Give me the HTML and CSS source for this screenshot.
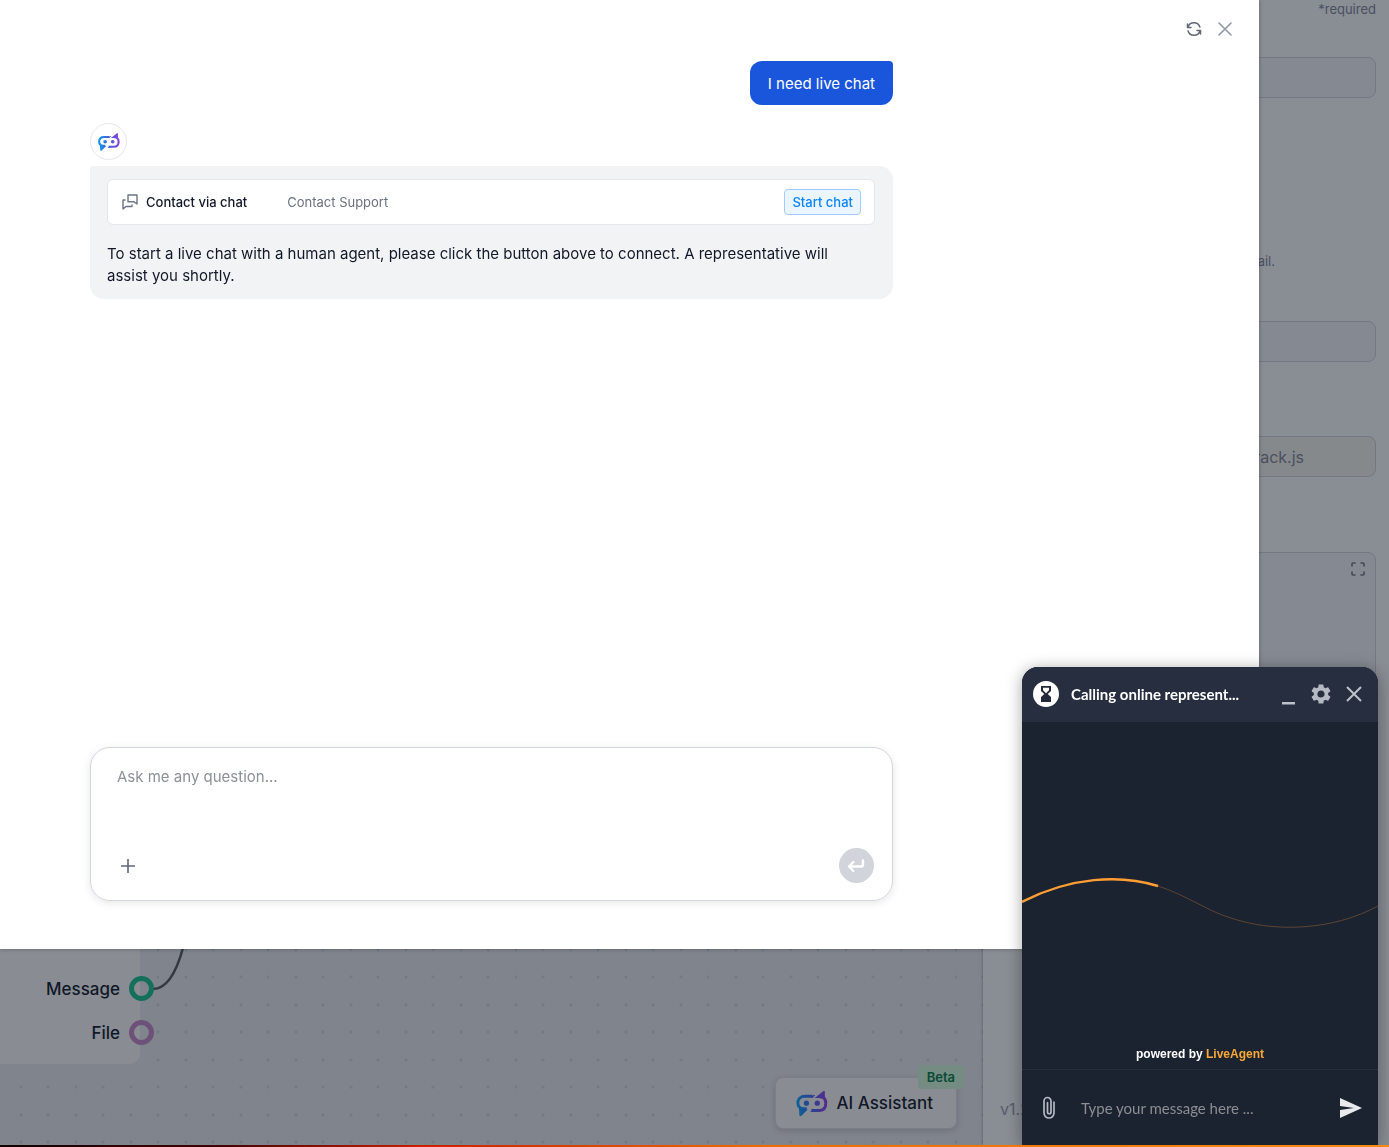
FILE: index.html
```html
<!DOCTYPE html>
<html lang="en">
<head>
    <meta charset="UTF-8">
    <meta name="viewport" content="width=device-width, initial-scale=1.0">
    <title>AI Assistant</title>
    <link rel="stylesheet" href="styles.css">
</head>
<body>
    <!-- Shared logo -->
    <svg class="defs" width="0" height="0" aria-hidden="true">
        <defs>
            <linearGradient id="logoGradient" gradientUnits="userSpaceOnUse" x1="0" y1="40" x2="96" y2="36">
                <stop offset="0" stop-color="#0c9be8"/>
                <stop offset="0.45" stop-color="#3f66e0"/>
                <stop offset="1" stop-color="#8b3fd9"/>
            </linearGradient>
            <symbol id="logo" viewBox="0 0 96 76">
                <g fill="none" stroke="url(#logoGradient)" stroke-width="9">
                    <path d="M50 16H27C12 16 5 25 5 36c0 11 7 18 17 18h10"/>
                    <path d="M46 59h23c14 0 21-9 21-22 0-9-4-15-9-19"/>
                </g>
                <path fill="url(#logoGradient)" d="M8 48l2 28h5l20-20zM45 20l8-8h5l-8 9zM56 21 83 0h4v22l-6 2-12-3zM54 54 42 64h12z"/>
                <circle fill="url(#logoGradient)" cx="31" cy="37" r="8"/>
                <circle fill="url(#logoGradient)" cx="64" cy="37" r="8"/>
            </symbol>
        </defs>
    </svg>

    <div class="workspace">
        <!-- Flow canvas -->
        <main class="canvas">
            <svg class="edge" width="34" height="44" viewBox="0 0 34 44" aria-hidden="true">
                <path d="M2 41C17 41 26 22 32 0" fill="none" stroke="#343841" stroke-width="2.500"/>
            </svg>
            <div class="node">
                <div class="port">Message <span class="socket socket-message"></span></div>
                <div class="port">File <span class="socket socket-file"></span></div>
            </div>
            <button type="button" class="assistant-btn">
                <svg class="assistant-logo" aria-hidden="true"><use href="#logo"/></svg>
                AI Assistant
                <span class="beta">Beta</span>
            </button>
        </main>

        <!-- Settings panel -->
        <aside class="panel">
            <form class="settings">
                <p class="required">*required</p>
                <input type="text" class="field" aria-label="Name">
                <p class="hint">email.</p>
                <input type="text" class="field" aria-label="Email">
                <input type="text" class="field field-script" aria-label="Script" value="track.js">
                <div class="code">
                    <textarea class="field code-field" aria-label="Code"></textarea>
                    <button type="button" class="icon-btn expand" aria-label="Expand">
                        <svg width="14" height="14" viewBox="0 0 14 14" fill="none" stroke="#444957" stroke-width="1.600" stroke-linecap="round" stroke-linejoin="round"><path d="M1 4V2q0-1 1-1h2M10 1h2q1 0 1 1v2M13 10v2q0 1-1 1h-2M4 13H2q-1 0-1-1v-2"/></svg>
                    </button>
                </div>
            </form>
            <p class="version">v1.2</p>
        </aside>
    </div>

    <!-- Assistant dialog -->
    <section class="dialog">
        <header class="dialog-header">
            <button type="button" class="icon-btn" aria-label="Restart">
                <svg width="16" height="16" viewBox="0 0 16 16" fill="none" stroke="#5f6775" stroke-width="1.500" stroke-linecap="round" stroke-linejoin="round"><path d="M1.500 3v3.500H5M14.500 13V9.500H11M2 6.300A6.200 6.200 0 0 1 13.900 6M14 9.700A6.200 6.200 0 0 1 2.100 10"/></svg>
            </button>
            <button type="button" class="icon-btn" aria-label="Close">
                <svg width="16" height="16" viewBox="0 0 16 16" fill="none" stroke="#8f98a8" stroke-width="1.600" stroke-linecap="round"><path d="M2 2l12 12M14 2L2 14"/></svg>
            </button>
        </header>

        <div class="conversation">
            <p class="message message-user">I need live chat</p>
            <div class="avatar">
                <svg class="avatar-logo" aria-hidden="true"><use href="#logo"/></svg>
            </div>
            <div class="message message-bot">
                <div class="contact">
                    <svg width="16" height="16" viewBox="0 0 16 16" fill="none" stroke="#6b7485" stroke-width="1.400" stroke-linejoin="round"><path d="M6 1h9v9l-3-2.300H6zM3.500 6H1v9l3-2.500h6V10.500"/></svg>
                    <span class="contact-title">Contact via chat</span>
                    <span class="contact-info">Contact Support</span>
                    <button type="button" class="start-btn">Start chat</button>
                </div>
                <p class="answer">To start a live chat with a human agent, please click the button above to connect. A representative will assist you shortly.</p>
            </div>
        </div>

        <form class="composer">
            <textarea class="composer-input" placeholder="Ask me any question..." aria-label="Question"></textarea>
            <div class="composer-actions">
                <button type="button" class="icon-btn" aria-label="Add">
                    <svg width="16" height="16" viewBox="0 0 16 16" fill="none" stroke="#5f6779" stroke-width="1.600"><path d="M8 1v14M1 8h14"/></svg>
                </button>
                <button type="button" class="send-btn" aria-label="Send">
                    <svg width="20" height="14" viewBox="0 0 20 14" fill="none" stroke="#fff" stroke-width="2.400" stroke-linecap="round" stroke-linejoin="round"><path d="M16 1.500V5.500Q16 7.500 14 7.500H2M6.300 3 2 7.500l4.300 4.500"/></svg>
                </button>
            </div>
        </form>
    </section>

    <!-- LiveAgent widget -->
    <section class="widget">
        <header class="widget-header">
            <span class="widget-status">
                <svg width="12" height="16" viewBox="0 0 12 16"><path fill="#222a3b" fill-rule="evenodd" d="M1 0h10v5L7.700 8 11 11v5H1v-5l3.300-3L1 5zM3 1.700v2.600l3 2.900 3-2.900V1.700z"/></svg>
            </span>
            <h2 class="widget-title">Calling online represent...</h2>
            <div class="widget-controls">
                <button type="button" class="icon-btn" aria-label="Minimize">
                    <svg width="14" height="22" viewBox="0 0 14 22"><path fill="#bcc1ca" d="M0 19h13v2.500H0z"/></svg>
                </button>
                <button type="button" class="icon-btn" aria-label="Settings">
                    <svg width="24" height="24" viewBox="0 0 24 24"><path fill="#b4b9c2" d="M19.140 12.940c.04-.3.060-.610.060-.940 0-.320-.020-.640-.070-.940l2.030-1.580a.49.49 0 0 0 .12-.610l-1.920-3.320a.488.488 0 0 0-.590-.220l-2.390.960c-.5-.380-1.030-.7-1.620-.940l-.360-2.540a.484.484 0 0 0-.480-.410h-3.840c-.240 0-.430.170-.470.410l-.360 2.540c-.590.240-1.130.570-1.620.940l-2.390-.960c-.220-.080-.470 0-.590.220L2.740 8.870c-.120.210-.080.470.120.610l2.030 1.580c-.050.3-.090.630-.090.940s.020.640.070.940l-2.030 1.580a.49.49 0 0 0-.120.610l1.920 3.320c.120.220.370.290.590.220l2.390-.960c.5.380 1.030.7 1.620.940l.360 2.540c.050.240.240.410.480.410h3.840c.240 0 .440-.170.470-.410l.360-2.540c.590-.240 1.130-.560 1.620-.940l2.390.960c.220.080.470 0 .590-.220l1.920-3.320c.120-.220.070-.470-.120-.610zM12 15.600A3.610 3.610 0 0 1 8.400 12c0-1.980 1.620-3.600 3.600-3.600s3.600 1.620 3.600 3.600-1.620 3.600-3.600 3.600z"/></svg>
                </button>
                <button type="button" class="icon-btn" aria-label="End chat">
                    <svg width="16" height="16" viewBox="0 0 16 16" fill="none" stroke="#bcc1ca" stroke-width="2"><path d="M1 1l14 14M15 1L1 15"/></svg>
                </button>
            </div>
        </header>
        <div class="widget-body">
            <svg class="wave" viewBox="0 0 356 52" fill="none" aria-hidden="true">
                <path d="M0 25C48 0 98-3 136 9C164 18 186 34 206 40C250 56 310 54 356 29" stroke="#5c4434" stroke-width="1"/>
                <path d="M0 25C48 0 98-3 136 9" stroke="#ff9c33" stroke-width="2.500"/>
            </svg>
            <p class="powered">powered by <a href="#">LiveAgent</a></p>
        </div>
        <form class="widget-footer">
            <button type="button" class="icon-btn" aria-label="Attach file">
                <svg width="14" height="24" viewBox="0 0 14 24" fill="none" stroke="#b4b9c2" stroke-width="1.700" stroke-linecap="round"><path d="M12 6v11a5 5 0 0 1-10 0V5a3.500 3.500 0 0 1 7 0v11a1.700 1.700 0 0 1-3.500 0V6.500"/></svg>
            </button>
            <input type="text" class="widget-input" placeholder="Type your message here ..." aria-label="Message">
            <button type="button" class="icon-btn" aria-label="Send message">
                <svg width="22" height="20" viewBox="0 0 22 20"><path fill="#e8eaee" d="M0 0l22 10L0 20v-8l14-2L0 8z"/></svg>
            </button>
        </form>
    </section>

    <div class="progress"></div>
</body>
</html>
```
FILE: styles.css
```css
* {
    margin: 0;
    padding: 0;
    box-sizing: border-box;
}

body {
    height: 100vh;
    overflow: hidden;
    font-family: Inter, sans-serif;
    font-size: 15px;
    color: #111827;
}

button, input, textarea {
    font: inherit;
    color: inherit;
}

textarea {
    display: block;
    resize: none;
}

svg {
    display: block;
    flex: none;
}

.defs {
    position: absolute;
}

.icon-btn {
    display: flex;
    align-items: center;
    justify-content: center;
    border: none;
    background: none;
    cursor: pointer;
}

/* Page behind the dialog */
.workspace {
    display: grid;
    grid-template-columns: 1fr 406px;
    height: 100vh;
}

.canvas {
    position: relative;
    background-color: #80848c;
    background-image:
        radial-gradient(circle at 21px 15px, #737985 1px, transparent 2px),
        radial-gradient(circle at 48px 15px, #737985 1px, transparent 2px),
        radial-gradient(circle at 21px 42px, #737985 1px, transparent 2px),
        radial-gradient(circle at 48px 42px, #737985 1px, transparent 2px);
    background-size: 55px 55px;
}

.node {
    position: absolute;
    left: 0;
    bottom: 82px;
    width: 141px;
    padding: 40px 0 19px;
    display: flex;
    flex-direction: column;
    gap: 19px;
    background: #898d93;
    border: 1px solid #80848b;
    border-left: none;
    border-radius: 0 0 12px 0;
}

.port {
    display: flex;
    align-items: center;
    justify-content: flex-end;
    gap: 9px;
    margin-right: -14px;
    font-size: 17px;
    font-weight: 500;
}

.socket {
    width: 25px;
    height: 25px;
    border: 5px solid;
    border-radius: 50%;
}

.socket-message {
    border-color: #14705a;
}

.socket-file {
    border-color: #6d5179;
}

.edge {
    position: absolute;
    left: 151px;
    bottom: 155px;
}

.assistant-btn {
    position: absolute;
    right: 26px;
    bottom: 18px;
    display: flex;
    align-items: center;
    gap: 9px;
    height: 52px;
    padding: 0 23px 0 20px;
    border: 1px solid #7a7e87;
    border-radius: 8px;
    background: #898d93;
    box-shadow: 0 2px 6px rgba(0, 0, 0, 0.15);
    font-size: 17px;
    font-weight: 500;
    cursor: pointer;
}

.assistant-logo {
    width: 32px;
    height: 25px;
    filter: brightness(0.65);
}

.beta {
    position: absolute;
    top: -13px;
    right: -8px;
    padding: 4px 9px;
    border-radius: 4px;
    background: #748c82;
    color: #0b4a35;
    font-size: 13px;
    line-height: 16px;
    font-weight: 600;
}

.panel {
    display: flex;
    flex-direction: column;
    justify-content: space-between;
    background: #898d94;
    box-shadow: 0 0 3px rgba(0, 0, 0, 0.3);
    z-index: 1;
}

.settings {
    padding: 0 13px;
    font-size: 13px;
    color: #4a505f;
}

.required {
    line-height: 18px;
    margin-bottom: 39px;
    text-align: right;
}

.field {
    display: block;
    width: 100%;
    height: 41px;
    padding: 0 16px;
    border: 1px solid #747884;
    border-radius: 8px;
    background: #858991;
    font-size: 16px;
}

.hint {
    margin: 154px 101px 51px 0;
    line-height: 18px;
    text-align: right;
}

.field-script {
    margin: 74px 0 75px;
    padding-right: 71px;
    background: #85898c;
    text-align: right;
}

.code {
    position: relative;
}

.code-field {
    height: 180px;
}

.expand {
    position: absolute;
    top: 10px;
    right: 11px;
}

.version {
    padding: 0 17px 28px;
    font-size: 16px;
    line-height: 20px;
    color: #565c69;
}

/* Dialog */
.dialog {
    position: fixed;
    inset: 0 130px 198px 0;
    z-index: 2;
    display: flex;
    flex-direction: column;
    padding: 0 366px 48px 90px;
    background: #fff;
    box-shadow: 0 0 4px rgba(0, 0, 0, 0.3);
}

.dialog-header {
    display: flex;
    justify-content: flex-end;
    gap: 15px;
    margin-right: -340px;
    padding-top: 21px;
}

.conversation {
    flex: 1;
    display: flex;
    flex-direction: column;
    align-items: flex-start;
    padding-top: 24px;
}

.message {
    line-height: 22px;
}

.message-user {
    align-self: flex-end;
    padding: 12px 18px 10px;
    border-radius: 12px 4px 12px 12px;
    background: #1a56db;
    color: #fff;
}

.avatar {
    display: flex;
    align-items: center;
    justify-content: center;
    width: 37px;
    height: 37px;
    margin: 18px 0 6px;
    border: 1px solid #e5e7eb;
    border-radius: 50%;
}

.avatar-logo {
    width: 22px;
    height: 18px;
}

.message-bot {
    width: 100%;
    padding: 13px 18px 12px 17px;
    border-radius: 4px 14px 14px 14px;
    background: #f2f3f5;
}

.contact {
    display: flex;
    align-items: center;
    padding: 9px 13px 9px 14px;
    margin-bottom: 18px;
    border: 1px solid #e5e7eb;
    border-radius: 6px;
    background: #fff;
    font-size: 13px;
}

.contact-title {
    margin: 0 40px 0 8px;
    font-weight: 500;
}

.contact-info {
    color: #6b7280;
}

.start-btn {
    margin-left: auto;
    padding: 0 7px;
    height: 26px;
    border: 1px solid #a4cafe;
    border-radius: 4px;
    background: #ebf5ff;
    color: #0a84ff;
    font-weight: 500;
    cursor: pointer;
}

.answer {
    padding-right: 16px;
}

.composer {
    display: flex;
    flex-direction: column;
    justify-content: space-between;
    height: 154px;
    padding: 18px 18px 17px 26px;
    border: 1px solid #d1d5e0;
    border-radius: 20px;
    box-shadow: 0 2px 8px rgba(0, 0, 0, 0.1);
}

.composer-input {
    width: 100%;
    height: 60px;
    border: none;
    outline: none;
    background: none;
    line-height: 22px;
}

.composer-input::placeholder {
    color: #8d9096;
}

.composer-actions {
    display: flex;
    align-items: center;
    justify-content: space-between;
    padding-left: 3px;
}

.send-btn {
    display: flex;
    align-items: center;
    justify-content: center;
    width: 35px;
    height: 35px;
    border: none;
    border-radius: 50%;
    background: #d1d5db;
}

/* LiveAgent widget */
.widget {
    position: fixed;
    right: 11px;
    bottom: 2px;
    z-index: 3;
    display: flex;
    flex-direction: column;
    width: 356px;
    height: 478px;
    border-radius: 16px 16px 0 0;
    overflow: hidden;
    background: #1c2330;
    box-shadow: 0 2px 16px rgba(0, 0, 0, 0.35);
    font-family: Lato, sans-serif;
    color: #fff;
}

.widget-header {
    display: flex;
    align-items: center;
    height: 55px;
    padding: 0 16px 2px 11px;
    background: #262e40;
}

.widget-controls {
    display: flex;
    align-items: center;
    gap: 13px;
}

.widget-status {
    display: flex;
    align-items: center;
    justify-content: center;
    width: 26px;
    height: 26px;
    border-radius: 50%;
    background: #fff;
}

.widget-title {
    flex: 1;
    padding-left: 12px;
    font-size: 15px;
    line-height: 18px;
    font-weight: bold;
}

.widget-body {
    flex: 1;
    display: flex;
    flex-direction: column;
    justify-content: space-between;
    padding: 155px 0 6px;
}

.wave {
    width: 100%;
}

.powered {
    font-family: "Liberation Sans", sans-serif;
    font-size: 12px;
    line-height: 18px;
    font-weight: bold;
    text-align: center;
}

.powered a {
    color: #fba734;
    text-decoration: none;
}

.widget-footer {
    display: flex;
    align-items: center;
    gap: 25px;
    height: 76px;
    padding: 0 16px 0 20px;
    border-top: 1px solid #26303d;
}

.widget-input {
    flex: 1;
    min-width: 0;
    border: none;
    outline: none;
    background: none;
    font-size: 15px;
}

.widget-input::placeholder {
    color: #8b8e92;
}

.progress {
    position: fixed;
    inset: auto 0 0 0;
    z-index: 4;
    height: 2px;
    background: linear-gradient(90deg, #140000, #3a0000 15%, #c81e00 30%, #f06a00 55%, #f58a10);
}
```
